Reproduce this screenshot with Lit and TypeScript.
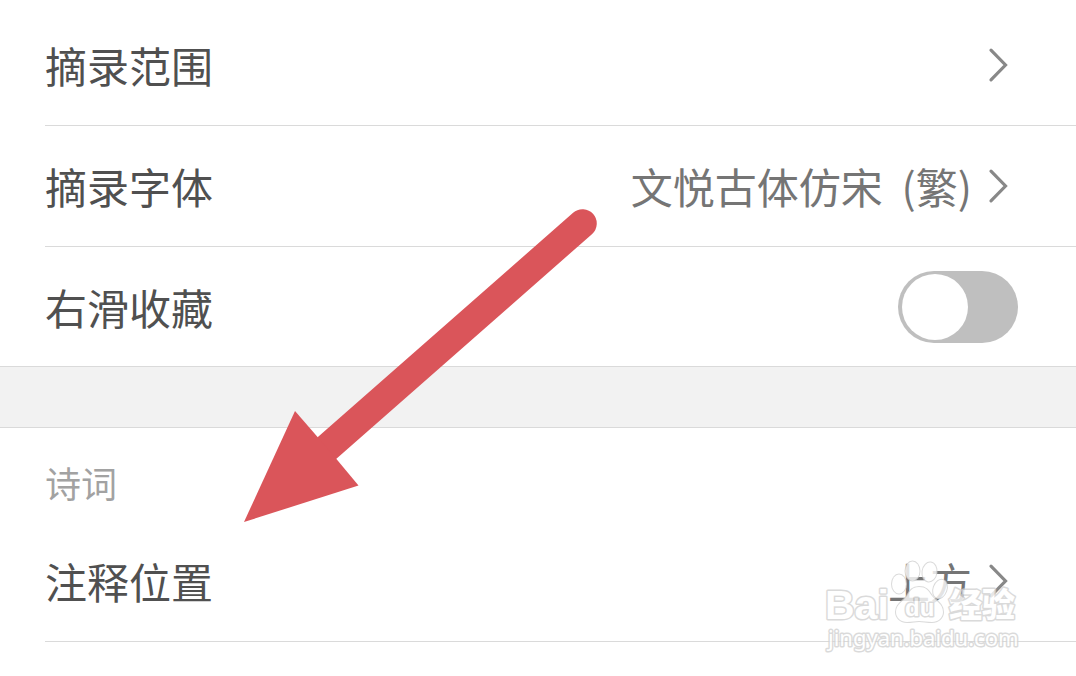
import { LitElement, html, css, svg, nothing } from "lit";
import { customElement, property, state } from "lit/decorators.js";

const fontStack = css`"Noto Sans CJK SC", "Noto Sans", sans-serif`;

@customElement("nav-row")
class NavRow extends LitElement {
  @property() label = "";
  @property() value = "";

  static styles = css`
    :host {
      display: block;
    }
    .row {
      display: flex;
      align-items: center;
      justify-content: space-between;
      box-sizing: border-box;
      width: 100%;
      height: 121px;
      padding: 0 68px 0 0;
      border: 0;
      border-bottom: 1px solid #dadada;
      background: none;
      font: 400 42px/60px ${fontStack};
      color: #505050;
      text-align: left;
      cursor: pointer;
    }
    .end {
      display: flex;
      align-items: center;
      gap: 16px;
      color: #757575;
      white-space: pre;
    }
    .chevron {
      width: 20px;
      height: 36px;
      fill: none;
      stroke: #888;
      stroke-width: 3.2;
      stroke-linecap: round;
    }
  `;

  render() {
    return html`<button class="row" type="button">
      <span>${this.label}</span>
      <span class="end"
        >${this.value ? html`<span>${this.value}</span>` : nothing}<svg
          class="chevron"
          viewBox="0 0 20 36"
          aria-hidden="true"
        >
          <path d="M3 3.2 17.5 18 3 32.8" /></svg
      ></span>
    </button>`;
  }
}

@customElement("switch-row")
class SwitchRow extends LitElement {
  @property() label = "";
  @state() private on = false;

  static styles = css`
    :host {
      display: block;
    }
    .row {
      display: flex;
      align-items: center;
      justify-content: space-between;
      height: 119px;
      padding-right: 58px;
      font: 400 42px/60px ${fontStack};
      color: #505050;
    }
    .switch {
      appearance: none;
      box-sizing: border-box;
      width: 120px;
      height: 72px;
      margin: 0;
      padding: 3px 4px;
      border-radius: 36px;
      background: #bfbfbf;
      cursor: pointer;
    }
    .switch::before {
      content: "";
      display: block;
      width: 66px;
      height: 66px;
      border-radius: 50%;
      background: #fff;
    }
    .switch:checked {
      background: #4cc764;
    }
    .switch:checked::before {
      margin-left: auto;
    }
  `;

  render() {
    return html`<div class="row">
      <label for="toggle">${this.label}</label>
      <input
        id="toggle"
        class="switch"
        type="checkbox"
        .checked=${this.on}
        @change=${(e: Event) => (this.on = (e.target as HTMLInputElement).checked)}
      />
    </div>`;
  }
}

@customElement("app-root")
class AppRoot extends LitElement {
  static styles = css`
    :host {
      display: block;
      position: relative;
      min-height: 100vh;
      overflow: hidden;
      background: #fff;
      font-family: ${fontStack};
    }
    .group {
      padding-left: 45px;
    }
    .first {
      padding-top: 5px;
    }
    .band {
      height: 60px;
      border: solid #dadada;
      border-width: 1px 0;
      background: #f2f2f2;
    }
    .heading {
      margin: 0;
      padding: 28px 0 13px;
      font: 400 36px/52px ${fontStack};
      color: #a2a2a2;
    }
    .arrow {
      position: absolute;
      top: 200px;
      left: 240px;
      width: 370px;
      height: 330px;
      pointer-events: none;
    }
    .mark {
      position: absolute;
      top: 556px;
      right: 50px;
      width: 206px;
      height: 100px;
      pointer-events: none;
      opacity: 0.8;
    }
    .outline {
      fill: #fff;
      stroke: #d2d2d2;
      stroke-width: 3;
      stroke-linejoin: round;
      paint-order: stroke;
    }
    .paw {
      stroke-width: 2;
    }
    .latin {
      font: 700 41px "Liberation Sans", sans-serif;
    }
    .du {
      font: 700 24px "Liberation Sans", sans-serif;
    }
    .han {
      font: 900 33px ${fontStack};
    }
    .site {
      font: 400 22px "Noto Sans", sans-serif;
    }
  `;

  private arrow() {
    return html`<svg class="arrow" viewBox="0 0 370 330" aria-hidden="true">
      <path d="M87 248 342.5 23.5" stroke="#da555a" stroke-width="28.5" stroke-linecap="round" />
      <path d="M4 322 55 211 78 237.5 96 258.5 118.5 285.5Z" fill="#da555a" />
    </svg>`;
  }

  private watermark() {
    const toes = [
      [79, 28, 7, 9.5, 0],
      [92.5, 15, 7, 9.5, 0],
      [109.5, 16, 7, 9.5, 8],
      [120, 33, 6.5, 9.5, 20],
    ];
    return html`<svg class="mark" viewBox="0 0 206 100">
      <text class="outline latin" x="5" y="63">Bai</text>
      <g class="outline paw">
        ${toes.map(
          ([x, y, rx, ry, tilt]) =>
            svg`<ellipse cx=${x} cy=${y} rx=${rx} ry=${ry} transform=${`rotate(${tilt} ${x} ${y})`} />`
        )}
        <path
          d="M99 31c-7 0-9 4-12 9-4 6-11 8-11 16 0 6 5 10 11 10 5 0 8-1 12-1s8 1 13 1c6 0 11-4 11-10 0-8-7-11-11-16-4-6-6-9-13-9Z"
        />
      </g>
      <text class="outline du" x="85" y="60">du</text>
      <text class="outline han" x="129" y="61">经验</text>
      <text class="outline site" x="8" y="90">jingyan.baidu.com</text>
    </svg>`;
  }

  render() {
    return html`
      <section class="group first">
        <nav-row label="摘录范围"></nav-row>
        <nav-row label="摘录字体" value="文悦古体仿宋  (繁)"></nav-row>
        <switch-row label="右滑收藏"></switch-row>
      </section>
      <div class="band"></div>
      <section class="group">
        <h2 class="heading">诗词</h2>
        <nav-row label="注释位置" value="上方"></nav-row>
      </section>
      ${this.arrow()} ${this.watermark()}
    `;
  }
}
